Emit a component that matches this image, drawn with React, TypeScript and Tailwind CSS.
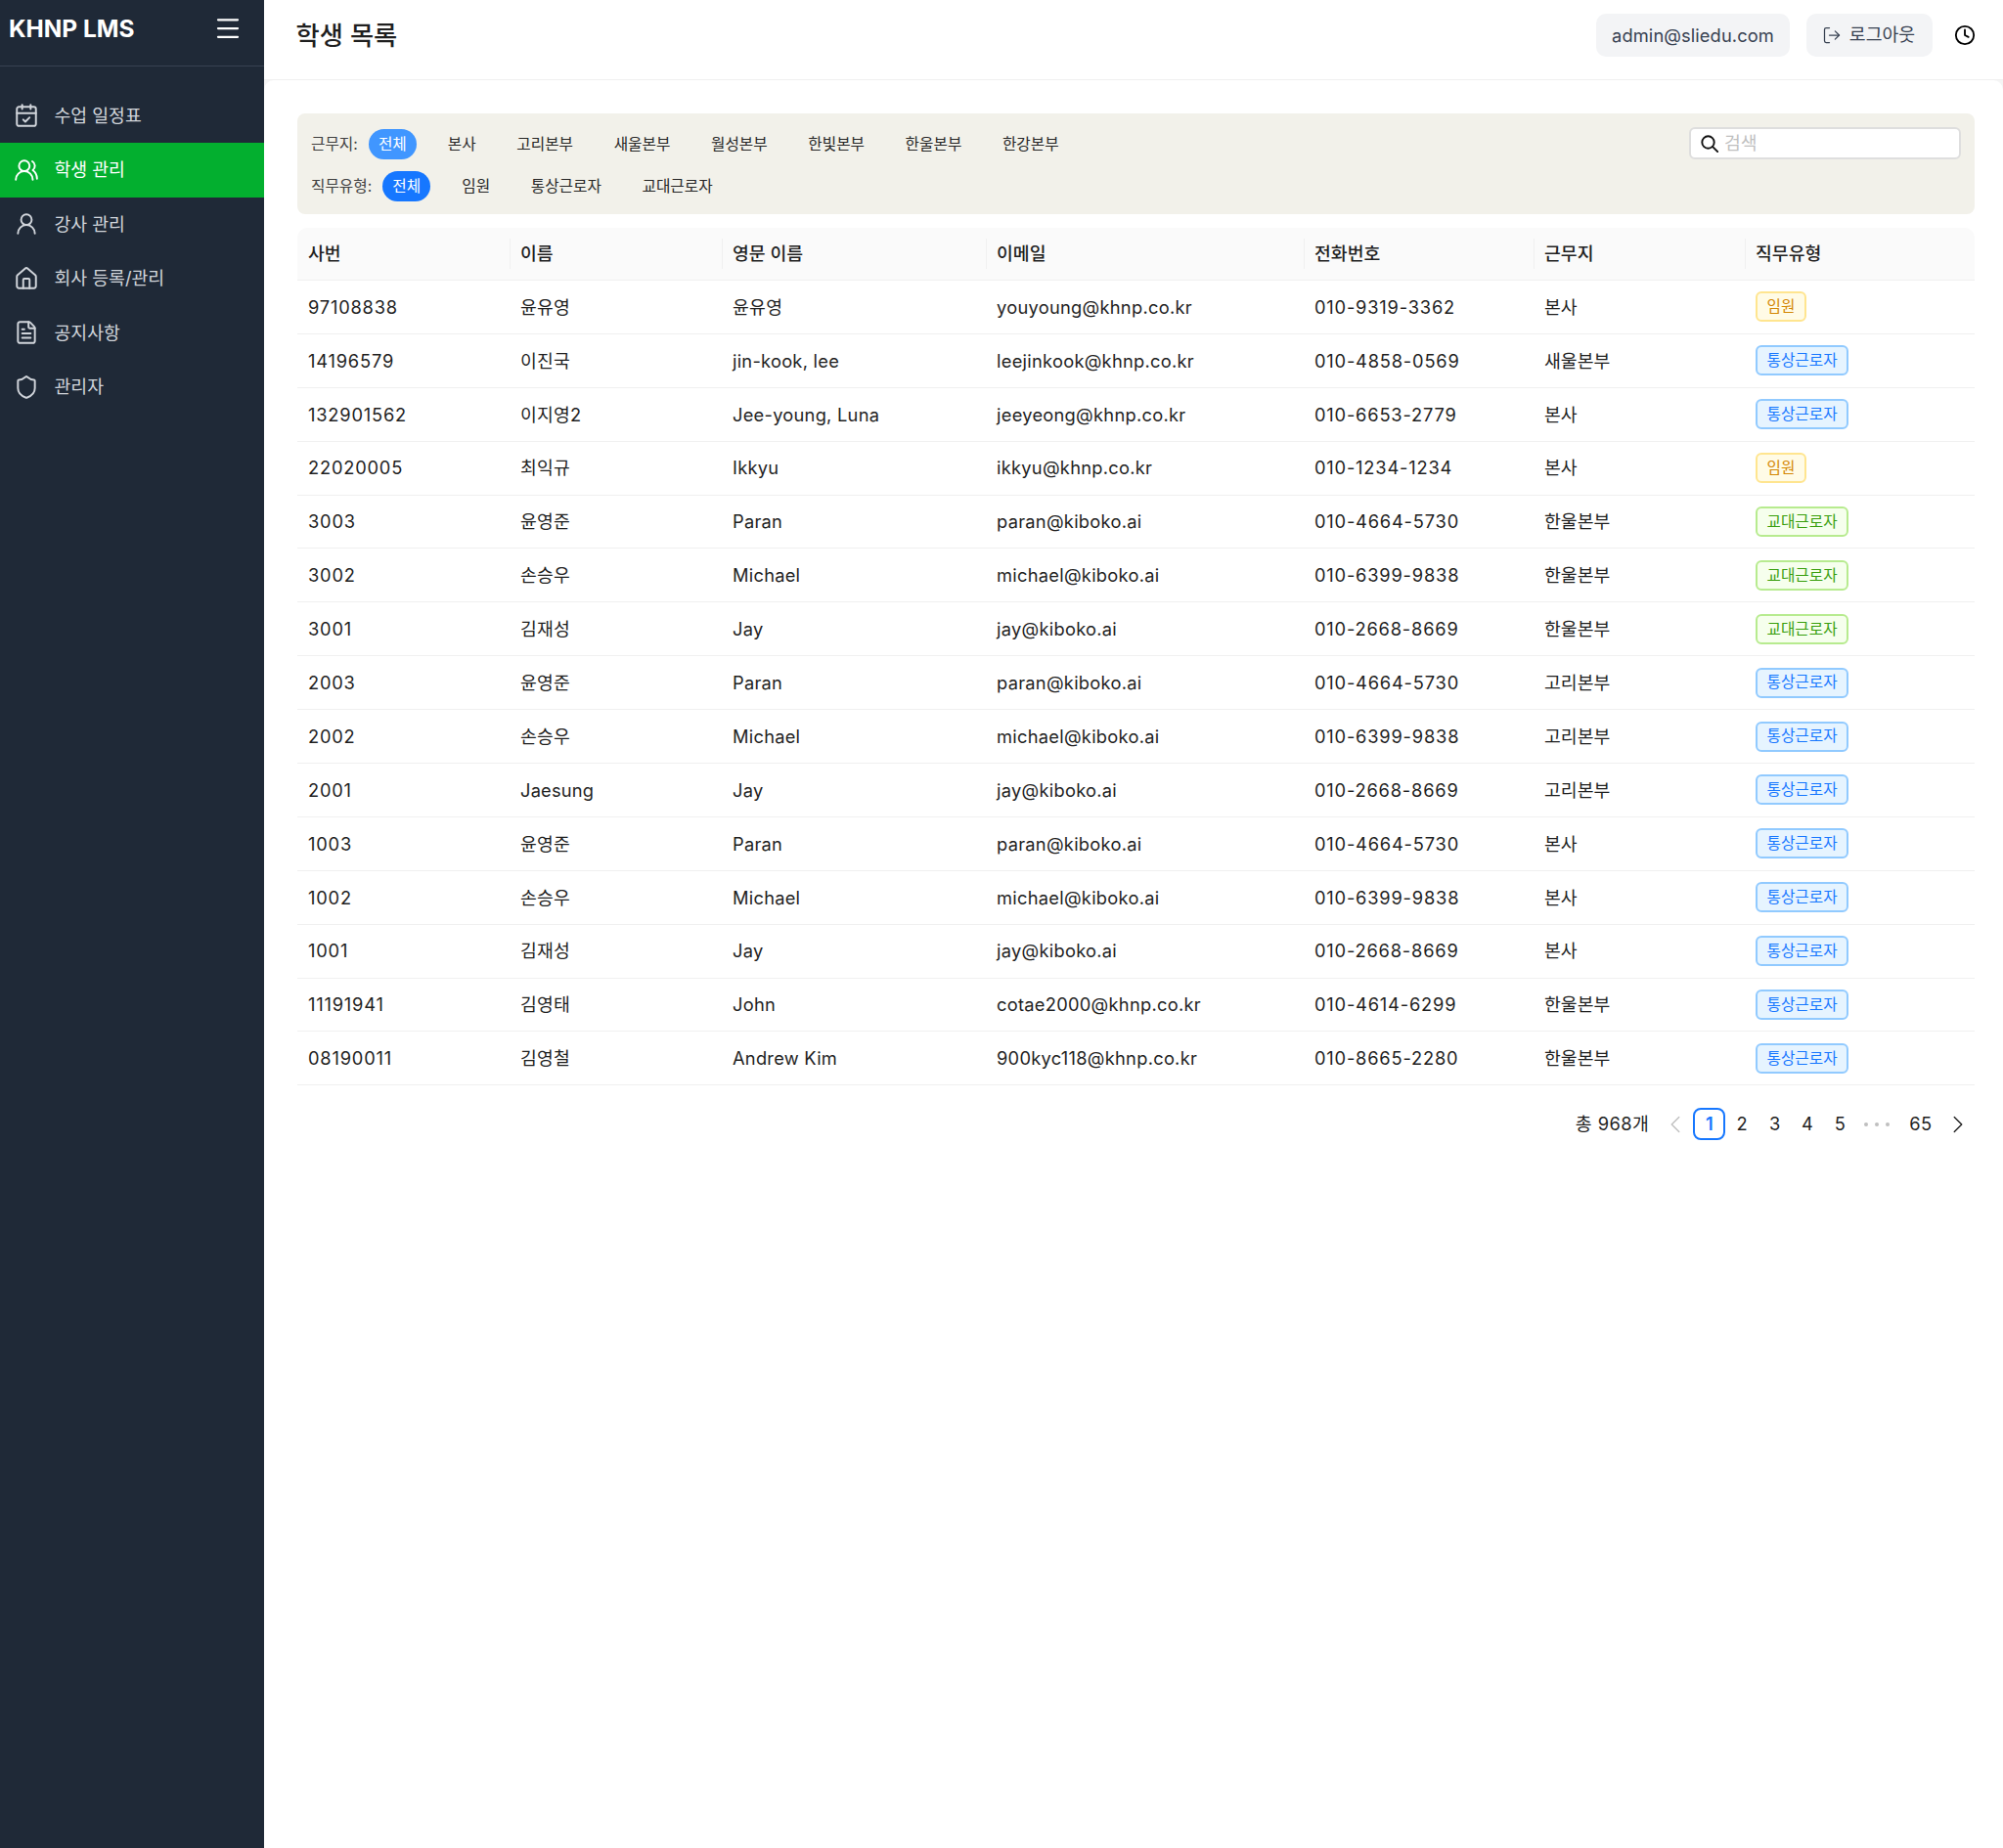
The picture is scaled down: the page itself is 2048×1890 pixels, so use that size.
import { CalendarCheck, Clock, FileText, House, LogOut, Menu, Shield, UserRound, UsersRound, ChevronLeft, ChevronRight } from "lucide-react"

const navigation = [
  { name: "수업 일정표", icon: CalendarCheck },
  { name: "학생 관리", icon: UsersRound, active: true },
  { name: "강사 관리", icon: UserRound },
  { name: "회사 등록/관리", icon: House },
  { name: "공지사항", icon: FileText },
  { name: "관리자", icon: Shield },
]

const sites = ["본사", "고리본부", "새울본부", "월성본부", "한빛본부", "한울본부", "한강본부"]
const jobTypes = ["임원", "통상근로자", "교대근로자"]
const columns = ["사번", "이름", "영문 이름", "이메일", "전화번호", "근무지", "직무유형"]

const students = [
  ["97108838", "윤유영", "윤유영", "youyoung@khnp.co.kr", "010-9319-3362", "본사", "임원"],
  ["14196579", "이진국", "jin-kook, lee", "leejinkook@khnp.co.kr", "010-4858-0569", "새울본부", "통상근로자"],
  ["132901562", "이지영2", "Jee-young, Luna", "jeeyeong@khnp.co.kr", "010-6653-2779", "본사", "통상근로자"],
  ["22020005", "최익규", "Ikkyu", "ikkyu@khnp.co.kr", "010-1234-1234", "본사", "임원"],
  ["3003", "윤영준", "Paran", "paran@kiboko.ai", "010-4664-5730", "한울본부", "교대근로자"],
  ["3002", "손승우", "Michael", "michael@kiboko.ai", "010-6399-9838", "한울본부", "교대근로자"],
  ["3001", "김재성", "Jay", "jay@kiboko.ai", "010-2668-8669", "한울본부", "교대근로자"],
  ["2003", "윤영준", "Paran", "paran@kiboko.ai", "010-4664-5730", "고리본부", "통상근로자"],
  ["2002", "손승우", "Michael", "michael@kiboko.ai", "010-6399-9838", "고리본부", "통상근로자"],
  ["2001", "Jaesung", "Jay", "jay@kiboko.ai", "010-2668-8669", "고리본부", "통상근로자"],
  ["1003", "윤영준", "Paran", "paran@kiboko.ai", "010-4664-5730", "본사", "통상근로자"],
  ["1002", "손승우", "Michael", "michael@kiboko.ai", "010-6399-9838", "본사", "통상근로자"],
  ["1001", "김재성", "Jay", "jay@kiboko.ai", "010-2668-8669", "본사", "통상근로자"],
  ["11191941", "김영태", "John", "cotae2000@khnp.co.kr", "010-4614-6299", "한울본부", "통상근로자"],
  ["08190011", "김영철", "Andrew Kim", "900kyc118@khnp.co.kr", "010-8665-2280", "한울본부", "통상근로자"],
]

const badgeStyles: Record<string, string> = {
  임원: "bg-[#fffbe6] border-[#ffe58f] text-[#d48806]",
  통상근로자: "bg-[#e6f4ff] border-[#91caff] text-[#1677ff]",
  교대근로자: "bg-[#f6ffed] border-[#b7eb8f] text-[#389e0d]",
}

// Inter runs a bit narrow against the original font, so latin columns get some tracking
const cellTracking = ["tracking-[0.8px]", "tracking-[0.2px]", "tracking-[0.25px]", "tracking-[0.27px]", "tracking-[0.8px]", ""]

const rowGrid = "grid grid-cols-[217px_217px_270px_325px_235px_216px_236px] items-center"

function FilterRow({ label, items, pill }: { label: string; items: string[]; pill: string }) {
  return (
    <div className="flex h-[32px] items-center text-[15.7px] text-[#262626]">
      <span className="mr-[11px] pt-[1px] text-[#404040]">{label}</span>
      <span className={`flex h-[31px] w-[49px] items-center justify-center rounded-full pt-[1px] text-white ${pill}`}>전체</span>
      <div className="ml-[22px] flex gap-[21.6px] pt-[1px]">
        {items.map((item) => (
          <span key={item} className="px-[10px]">{item}</span>
        ))}
      </div>
    </div>
  )
}

export default function App() {
  return (
    <div className="flex min-h-screen font-['Inter','Noto_Sans_CJK_KR',sans-serif] text-[18.3px] text-[#1f1f1f]">
      <aside className="w-[269.5px] shrink-0 bg-[#1f2937] text-[#d1d5db]">
        <div className="flex h-[68px] items-start justify-between border-b border-[#374151] pl-[9px] pr-[22px] pt-[13px]">
          <span className="text-[24.4px] font-bold leading-[32px] text-white">KHNP LMS</span>
          <Menu className="mt-[1px] h-[30px] w-[30px] text-white" strokeWidth={1.8} />
        </div>
        <nav className="mt-[22.5px]">
          {navigation.map((item) => (
            <div
              key={item.name}
              className={`flex h-[55.5px] items-center gap-[15.5px] pl-[14px] ${item.active ? "bg-[#03af2f] text-white" : ""}`}
            >
              <item.icon className="h-[26px] w-[26px]" strokeWidth={1.8} />
              {item.name}
            </div>
          ))}
        </nav>
      </aside>

      <div className="flex min-w-0 flex-1 flex-col bg-[#f5f5f5]">
        <header className="flex h-[82px] items-start justify-between border-b border-[#f0f0f0] bg-white pl-[33px] pr-[28px] pt-[14px]">
          <h1 className="pt-[2px] text-[26.3px] font-medium leading-[42px]">학생 목록</h1>
          <div className="flex items-center">
            <div className="flex h-[44px] w-[198px] items-center justify-center rounded-[10px] bg-[#f3f4f6] pt-[1px] tracking-[0.1px] text-[#374151]">
              admin@sliedu.com
            </div>
            <div className="ml-[17px] flex h-[44px] w-[129px] items-center justify-center gap-[8px] rounded-[10px] bg-[#f3f4f6] pr-[2px] text-[#374151]">
              <LogOut className="h-[20px] w-[20px]" strokeWidth={1.5} />
              로그아웃
            </div>
            <Clock className="ml-[22px] h-[22px] w-[22px] text-black" strokeWidth={2} />
          </div>
        </header>

        <main className="flex-1 rounded-t-[10px] bg-white pl-[34.5px] pr-[29px] pt-[34px]">
          <div className="flex justify-between rounded-[8px] bg-[#f2f1ea] px-[14px] pb-[13px] pt-[15px]">
            <div className="flex flex-col gap-[11px]">
              <FilterRow label="근무지:" items={sites} pill="bg-[#4096ff]" />
              <FilterRow label="직무유형:" items={jobTypes} pill="bg-[#1677ff]" />
            </div>
            <div className="-mt-[1px] flex h-[33px] w-[278px] items-center gap-[6px] rounded-[6px] border-2 border-[#dedede] bg-white pl-[10px] text-[#bfbfbf]">
              <svg viewBox="0 0 18 18" className="h-[18px] w-[18px]" fill="none" stroke="#111" strokeWidth="1.9" strokeLinecap="round">
                <circle cx="7.5" cy="7.5" r="6.2" />
                <path d="M12.2 12.2 17.2 17.2" />
              </svg>
              검색
            </div>
          </div>

          <div className="mt-[14px]">
            <div className={`${rowGrid} h-[54px] rounded-t-[10px] border-b border-[#f0f0f0] bg-[#fafafa] font-medium`}>
              {columns.map((col, i) => (
                <div key={col} className={`flex h-[31px] items-center ${i > 0 ? "border-l border-[#f0f0f0] pl-[10px] pr-[11px]" : "px-[11px]"}`}>
                  {col}
                </div>
              ))}
            </div>
            {students.map((row, r) => (
              <div key={r} className={`${rowGrid} h-[54.9px] border-b border-[#f0f0f0]`}>
                {row.slice(0, 6).map((cell, c) => (
                  <div key={c} className={`truncate px-[11px] pt-[1px] ${cellTracking[c]}`}>{cell}</div>
                ))}
                <div className="px-[11px]">
                  <span className={`inline-flex h-[31px] items-center rounded-[6px] border-2 px-[9.5px] text-[15.7px] ${badgeStyles[row[6]]}`}>
                    {row[6]}
                  </span>
                </div>
              </div>
            ))}
          </div>

          <div className="mt-[23px] flex items-center justify-end pr-[2px]">
            <span className="mr-[12px] tracking-[0.5px]">총 968개</span>
            <ChevronLeft className="mr-[3px] h-[30px] w-[30px] text-[#bfbfbf]" strokeWidth={1.1} />
            <span className="flex h-[33px] w-[33px] items-center justify-center rounded-[8px] border-2 border-[#1677ff] font-semibold text-[#1677ff]">1</span>
            {[2, 3, 4, 5].map((n) => (
              <span key={n} className="flex w-[33.4px] justify-center">{n}</span>
            ))}
            <span className="flex w-[42px] justify-center gap-[7px]">
              <i className="h-[4px] w-[4px] rounded-full bg-[#bfbfbf]" />
              <i className="h-[4px] w-[4px] rounded-full bg-[#bfbfbf]" />
              <i className="h-[4px] w-[4px] rounded-full bg-[#bfbfbf]" />
            </span>
            <span className="ml-[3px] flex w-[42px] justify-center tracking-[0.5px]">65</span>
            <ChevronRight className="ml-[2px] h-[30px] w-[30px] text-[#1f1f1f]" strokeWidth={1.1} />
          </div>
        </main>
      </div>
    </div>
  )
}
